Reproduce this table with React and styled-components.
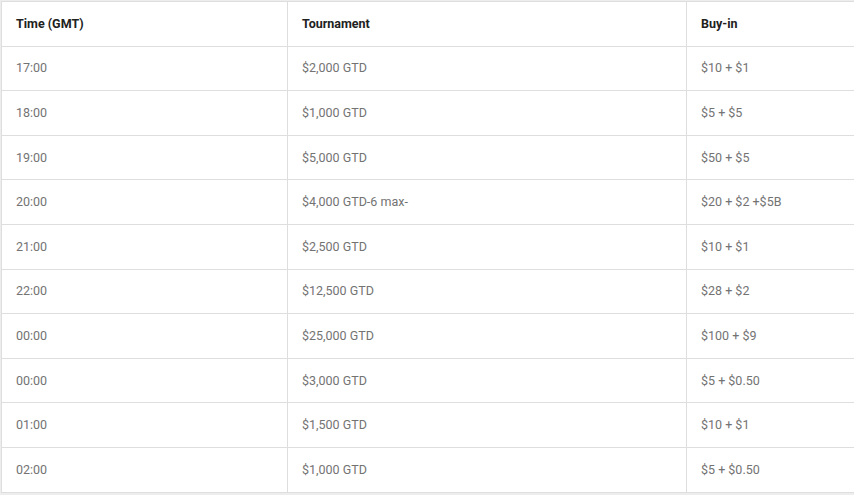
import React from "react";
import styled, { createGlobalStyle } from "styled-components";

const GlobalStyle = createGlobalStyle`
  html, body {
    margin: 0;
    padding: 0;
    background: #ededed;
    overflow: hidden;
  }
  body {
    font-family: Roboto, "Liberation Sans", Arial, sans-serif;
  }
`;

const Page = styled.div`
  width: 854px;
  height: 495px;
  padding: 1px 0 0 1px;
  box-sizing: border-box;
  overflow: hidden;
`;

const Table = styled.table`
  width: 990px;
  border-collapse: collapse;
  background: #fff;
  table-layout: fixed;
`;

const Cell = styled.td`
  height: 43.6px;
  padding: 0 0 0 14px;
  border: 1px solid #dedede;
  font-size: 12.5px;
  line-height: 14px;
  color: ${(p) => (p.$head ? "#212121" : "#737373")};
  font-weight: ${(p) => (p.$head ? 700 : 400)};
  text-align: left;
  vertical-align: middle;
  white-space: nowrap;
`;

const rows = [
  ["17:00", "$2,000 GTD", "$10 + $1"],
  ["18:00", "$1,000 GTD", "$5 + $5"],
  ["19:00", "$5,000 GTD", "$50 + $5"],
  ["20:00", "$4,000 GTD-6 max-", "$20 + $2 +$5B"],
  ["21:00", "$2,500 GTD", "$10 + $1"],
  ["22:00", "$12,500 GTD", "$28 + $2"],
  ["00:00", "$25,000 GTD", "$100 + $9"],
  ["00:00", "$3,000 GTD", "$5 + $0.50"],
  ["01:00", "$1,500 GTD", "$10 + $1"],
  ["02:00", "$1,000 GTD", "$5 + $0.50"],
];

export default function App() {
  return (
    <Page>
      <GlobalStyle />
      <Table>
        <colgroup>
          <col style={{ width: 286 }} />
          <col style={{ width: 399 }} />
          <col />
        </colgroup>
        <thead>
          <tr>
            <Cell as="th" $head>Time (GMT)</Cell>
            <Cell as="th" $head>Tournament</Cell>
            <Cell as="th" $head>Buy-in</Cell>
          </tr>
        </thead>
        <tbody>
          {rows.map((r, i) => (
            <tr key={i}>
              {r.map((c, j) => (
                <Cell key={j}>{c}</Cell>
              ))}
            </tr>
          ))}
        </tbody>
      </Table>
    </Page>
  );
}
